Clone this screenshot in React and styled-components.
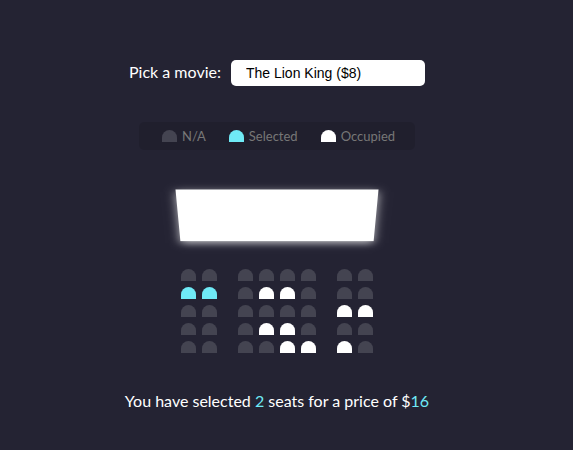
import React from 'react';
import styled, { createGlobalStyle } from 'styled-components';

const GlobalStyle = createGlobalStyle`
  * {
    box-sizing: border-box;
  }

  body {
    background-color: #242333;
    color: #fff;
    display: flex;
    flex-direction: column;
    align-items: center;
    justify-content: center;
    height: 100vh;
    margin: 0;
    padding: 4px 19px 0 0;
    font-family: 'Lato', sans-serif;
  }

  #root {
    display: flex;
    flex-direction: column;
    align-items: center;
  }
`;

const MovieContainer = styled.div`
  margin: 20px 0;

  label {
    font-size: 16px;
  }
`;

const MovieSelect = styled.select`
  background-color: #fff;
  color: #000;
  border: 0;
  border-radius: 5px;
  font-family: 'Liberation Sans', Arial, sans-serif;
  font-size: 14px;
  margin-left: 10px;
  padding: 5px 15px;
  width: 194px;
  appearance: none;
  -webkit-appearance: none;
`;

const Showcase = styled.ul`
  background: rgba(0, 0, 0, 0.1);
  padding: 5px 10px;
  border-radius: 5px;
  color: #777;
  list-style-type: none;
  display: flex;
  justify-content: space-between;
  margin: 16px 0;

  li {
    display: flex;
    align-items: center;
    justify-content: center;
    margin: 0 10px;
  }

  small {
    font-size: 13px;
    margin-left: 2px;
  }
`;

const colors = {
  free: '#444451',
  selected: '#6feaf6',
  occupied: '#fff',
};

const Seat = styled.div`
  background-color: ${({ $status }) => colors[$status || 'free']};
  height: 12px;
  width: 15px;
  margin: 3px;
  margin-right: ${({ $aisle }) => ($aisle === 'right' ? '18px' : '3px')};
  margin-left: ${({ $aisle }) => ($aisle === 'left' ? '18px' : '3px')};
  border-top-left-radius: 10px;
  border-top-right-radius: 10px;
`;

const Theatre = styled.div`
  perspective: 1000px;
  margin-bottom: 30px;
`;

const Screen = styled.div`
  background-color: #fff;
  height: 70px;
  width: 100%;
  margin: 15px 0;
  transform: rotateX(-45deg);
  box-shadow: 0 3px 10px rgba(255, 255, 255, 0.7);
`;

const Row = styled.div`
  display: flex;
`;

const Summary = styled.p`
  margin: 5px 0;
  font-size: 16px;

  span {
    color: #6feaf6;
  }
`;

const rows = [
  ['free', 'free', 'free', 'free', 'free', 'free', 'free', 'free'],
  ['selected', 'selected', 'free', 'occupied', 'occupied', 'free', 'free', 'free'],
  ['free', 'free', 'free', 'free', 'free', 'free', 'occupied', 'occupied'],
  ['free', 'free', 'free', 'occupied', 'occupied', 'free', 'free', 'free'],
  ['free', 'free', 'free', 'free', 'occupied', 'occupied', 'occupied', 'free'],
];

export default function App() {
  return (
    <>
      <GlobalStyle />
      <MovieContainer>
        <label htmlFor="movie">Pick a movie:</label>
        <MovieSelect id="movie" defaultValue="8">
          <option value="8">The Lion King ($8)</option>
          <option value="10">Avengers: Endgame ($10)</option>
          <option value="12">Joker ($12)</option>
          <option value="9">Toy Story 4 ($9)</option>
        </MovieSelect>
      </MovieContainer>

      <Showcase>
        <li>
          <Seat />
          <small>N/A</small>
        </li>
        <li>
          <Seat $status="selected" />
          <small>Selected</small>
        </li>
        <li>
          <Seat $status="occupied" />
          <small>Occupied</small>
        </li>
      </Showcase>

      <Theatre>
        <Screen />
        {rows.map((row, r) => (
          <Row key={r}>
            {row.map((status, i) => (
              <Seat
                key={i}
                $status={status}
                $aisle={i === 1 ? 'right' : i === 6 ? 'left' : undefined}
              />
            ))}
          </Row>
        ))}
      </Theatre>

      <Summary>
        You have selected <span>2</span> seats for a price of $<span>16</span>
      </Summary>
    </>
  );
}
